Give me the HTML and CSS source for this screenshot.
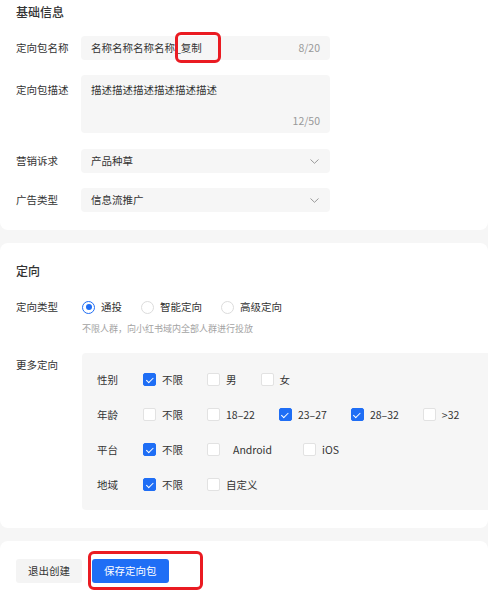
FILE: index.html
```html
<!DOCTYPE html>
<html lang="zh-CN">
<head>
<meta charset="utf-8">
<title>定向包</title>
<link rel="stylesheet" href="styles.css">
</head>
<body>
<div class="page">
  <section class="card card-basic">
    <h2 class="card-title">基础信息</h2>
    <div class="row">
      <div class="lbl">定向包名称</div>
      <div class="field field-input">
        <span class="val">名称名称名称名称_复制</span>
        <span class="count">8/20</span>
        <i class="hl hl-name"></i>
      </div>
    </div>
    <div class="row row-top gap-area">
      <div class="lbl lbl-top">定向包描述</div>
      <div class="field field-area">
        <span class="val">描述描述描述描述描述描述</span>
        <span class="count">12/50</span>
      </div>
    </div>
    <div class="row gap-sel1">
      <div class="lbl">营销诉求</div>
      <div class="field field-input">
        <span class="val">产品种草</span>
        <svg class="chev" width="9" height="5" viewBox="0 0 9 5"><polyline points="0.5,0.5 4.5,4.3 8.5,0.5" fill="none" stroke="#9a9a9a" stroke-width="1"/></svg>
      </div>
    </div>
    <div class="row gap-sel2">
      <div class="lbl">广告类型</div>
      <div class="field field-input">
        <span class="val">信息流推广</span>
        <svg class="chev" width="9" height="5" viewBox="0 0 9 5"><polyline points="0.5,0.5 4.5,4.3 8.5,0.5" fill="none" stroke="#9a9a9a" stroke-width="1"/></svg>
      </div>
    </div>
  </section>

  <section class="card card-target">
    <h2 class="card-title">定向</h2>
    <div class="row2 radio-row">
      <div class="lbl2">定向类型</div>
      <div class="radios">
        <span class="radio"><i class="rd on"></i>通投</span>
        <span class="radio"><i class="rd"></i>智能定向</span>
        <span class="radio"><i class="rd"></i>高级定向</span>
      </div>
    </div>
    <div class="hint">不限人群，向小红书域内全部人群进行投放</div>
    <div class="row2 more-row">
      <div class="lbl2 lbl-more">更多定向</div>
      <div class="more-box">
        <div class="opt-row">
          <div class="opt-lbl">性别</div>
          <span class="cb"><i class="box on"></i>不限</span>
          <span class="cb"><i class="box"></i>男</span>
          <span class="cb"><i class="box"></i>女</span>
        </div>
        <div class="opt-row">
          <div class="opt-lbl">年龄</div>
          <span class="cb"><i class="box"></i>不限</span>
          <span class="cb"><i class="box"></i>18–22</span>
          <span class="cb"><i class="box on"></i>23–27</span>
          <span class="cb"><i class="box on"></i>28–32</span>
          <span class="cb"><i class="box"></i>&gt;32</span>
        </div>
        <div class="opt-row">
          <div class="opt-lbl">平台</div>
          <span class="cb"><i class="box on"></i>不限</span>
          <span class="cb cb-wide"><i class="box"></i><span class="pad">Android</span></span>
          <span class="cb"><i class="box"></i>iOS</span>
        </div>
        <div class="opt-row">
          <div class="opt-lbl">地域</div>
          <span class="cb"><i class="box on"></i>不限</span>
          <span class="cb"><i class="box"></i>自定义</span>
        </div>
      </div>
    </div>
  </section>

  <section class="card card-foot">
    <button class="btn btn-gray">退出创建</button>
    <button class="btn btn-blue">保存定向包<i class="hl hl-btn"></i></button>
  </section>
</div>
</body>
</html>
```

FILE: styles.css
```css
* { box-sizing: border-box; }
html, body { margin: 0; padding: 0; }
body {
  background: #f6f6f6;
  font-family: "Noto Sans CJK SC", "Noto Sans", "Liberation Sans", sans-serif;
  color: #333;
  font-size: 10.5px;
  line-height: 16px;
}
.page { width: 488px; min-height: 595px; overflow: hidden; }

.card {
  background: #fff;
  border-radius: 8px;
}
.card-basic {
  border-top-left-radius: 0;
  border-top-right-radius: 0;
  padding: 4px 16px 18px;
}
.card-target {
  margin-top: 13px;
  padding: 20px 0 18px 16px;
}
.card-foot {
  margin-top: 13px;
  padding: 18px 16px 16px;
  border-bottom-left-radius: 0;
  border-bottom-right-radius: 0;
  min-height: 60px;
  display: flex;
  gap: 10px;
  align-items: flex-start;
}

.card-title {
  margin: 0;
  font-size: 12px;
  font-weight: 500;
  line-height: 16px;
  color: #333;
}
.card-basic .card-title { margin-bottom: 16px; }

.row { display: flex; align-items: center; }
.row-top { align-items: flex-start; }
.gap-area { margin-top: 15px; }
.gap-sel1 { margin-top: 16px; }
.gap-sel2 { margin-top: 15px; }

.lbl { width: 65px; flex: none; }
.lbl-top { padding-top: 7px; }

.field {
  position: relative;
  width: 249px;
  background: #f6f6f6;
  border-radius: 4px;
  padding: 0 10px;
}
.field-input {
  height: 24px;
  display: flex;
  align-items: center;
  justify-content: space-between;
}
.field-area {
  height: 58px;
  display: flex;
  flex-direction: column;
  justify-content: space-between;
  padding-top: 7px;
  padding-bottom: 4px;
}
.field-area .count { align-self: flex-end; }
.count { color: #999; }
.chev { display: block; margin-right: 1px; }

.hl {
  position: absolute;
  border: 3px solid #ea1b22;
  border-radius: 6px;
  pointer-events: none;
}
.hl-name { left: 94px; top: -4px; width: 46px; height: 31px; }

/* targeting */
.row2 { display: flex; align-items: center; }
.lbl2 { width: 66px; flex: none; }
.radio-row { margin-top: 20px; }
.radios { display: flex; gap: 19px; }
.radio { display: inline-flex; align-items: center; gap: 6px; }
.rd {
  width: 13px; height: 13px;
  border-radius: 50%;
  border: 1px solid #dcdcdc;
  background: #fff;
  position: relative;
  display: inline-block;
}
.rd.on { border: 1.5px solid #1f6ef5; }
.rd.on::after {
  content: "";
  position: absolute;
  left: 50%; top: 50%;
  width: 6px; height: 6px;
  margin: -3px 0 0 -3px;
  border-radius: 50%;
  background: #1f6ef5;
}
.hint {
  margin: 8px 0 0 66px;
  font-size: 9px;
  line-height: 12px;
  color: #a3a3a3;
}
.more-row { margin-top: 18px; align-items: flex-start; }
.lbl-more { padding-top: 4px; }
.more-box {
  flex: 1;
  background: #f6f6f6;
  border-radius: 4px 0 0 4px;
  padding: 9px 0 8px 15px;
}
.opt-row {
  height: 35px;
  display: flex;
  align-items: center;
  gap: 24px;
}
.opt-lbl { width: 22px; flex: none; }
.cb { display: inline-flex; align-items: center; gap: 6px; white-space: nowrap; }
.cb .pad { padding: 0 7px; }
.box {
  width: 13px; height: 13px;
  border-radius: 2px;
  border: 1px solid #e2e2e2;
  background: #fff;
  display: inline-block;
  position: relative;
  flex: none;
}
.box.on {
  background: #1f6ef5;
  border-color: #1f6ef5;
}
.box.on::after {
  content: "";
  position: absolute;
  left: 3.5px; top: 2px;
  width: 3px; height: 5.5px;
  border-right: 1.2px solid #fff;
  border-bottom: 1.2px solid #fff;
  transform: rotate(45deg);
}

/* footer */
.btn {
  position: relative;
  height: 24px;
  padding: 0 12px;
  border: none;
  border-radius: 3px;
  font-family: inherit;
  font-size: 10.5px;
  line-height: 24px;
  cursor: pointer;
}
.btn-gray { background: #f4f4f4; color: #333; }
.btn-blue { background: #1f6ef5; color: #fff; }
.hl-btn { left: -4px; top: -8px; width: 115px; height: 39px; }
```
